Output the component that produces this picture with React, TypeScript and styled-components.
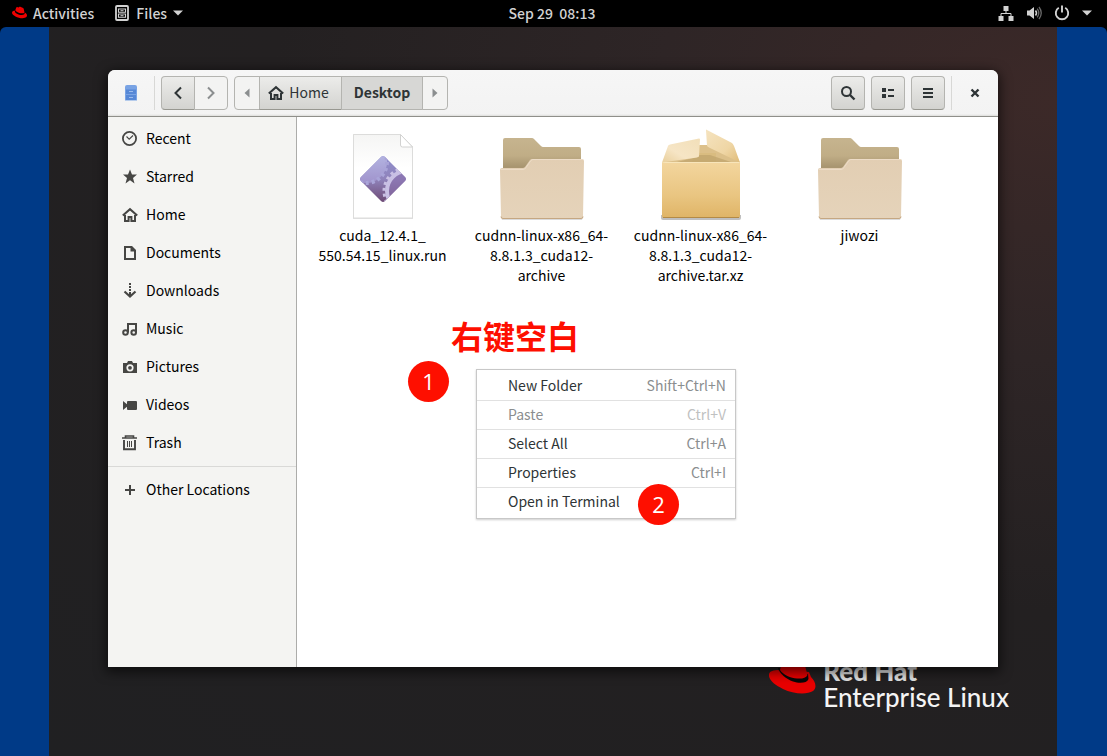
import React from "react";
import styled, { createGlobalStyle, css } from "styled-components";
import { FaRedhat } from "react-icons/fa";

const GlobalStyle = createGlobalStyle`
  * { box-sizing: border-box; }
  body {
    margin: 0;
    background: #000;
    font-family: "Noto Sans CJK SC", "Noto Sans", sans-serif;
    font-size: 14px;
    line-height: 20px;
    color: #000;
  }
  button { font: inherit; color: inherit; margin: 0; padding: 0; border: 0; background: none; }
  ul { list-style: none; margin: 0; padding: 0; }
  svg { display: block; flex: none; }
`;

const Screen = styled.div`
  display: flex;
  flex-direction: column;
  min-height: 100vh;
`;

const TopBar = styled.header`
  display: grid;
  grid-template-columns: 1fr auto 1fr;
  align-items: center;
  height: 27px;
  padding: 0 15px 2px 12px;
  color: #d2d2d2;
  font-weight: 500;
`;

const BarGroup = styled.div<{ $end?: boolean; $gap: number }>`
  display: flex;
  align-items: center;
  gap: ${(p) => p.$gap}px;
  justify-content: ${(p) => (p.$end ? "flex-end" : "flex-start")};
`;

const BarButton = styled.button`
  display: flex;
  align-items: center;
  gap: 6px;
  height: 24px;
  font-weight: 500;
`;

const Desktop = styled.main`
  flex: 1;
  display: flex;
  background: #003a87;
  border-radius: 6px 6px 0 0;
  padding: 0 50px 0 49px;
`;

const Wallpaper = styled.div`
  position: relative;
  isolation: isolate;
  flex: 1;
  display: flex;
  padding: 43px 59px 89px;
  background: radial-gradient(ellipse at 100% 10%, #3c2928 0%, #2e2526 28%, #232021 55%, #202022 100%);
`;

const Brand = styled.div`
  position: absolute;
  z-index: -1;
  right: 48px;
  bottom: 46px;
  display: flex;
  gap: 7px;
  color: #f4f4f4;
  font-family: Lato, sans-serif;
  font-size: 26px;
  font-weight: 500;
  line-height: 26px;
`;

const BrandName = styled.div`
  font-weight: 900;
  color: #e0e0e0;
`;

const Window = styled.section`
  flex: 1;
  display: flex;
  flex-direction: column;
  background: #fff;
  border-radius: 7px 7px 0 0;
  box-shadow: 0 3px 12px 2px rgba(0, 0, 0, 0.6);
`;

const HeaderBar = styled.div`
  display: flex;
  align-items: center;
  gap: 6px;
  height: 47px;
  padding: 0 6px 0 0;
  border-bottom: 1px solid #8f8f8a;
  border-radius: 7px 7px 0 0;
  background: linear-gradient(#f6f6f6, #f3f3f3 44px, #dededb 46px);
  color: #2e3436;
`;

const AppMark = styled.div`
  display: flex;
  justify-content: center;
  width: 40px;
  padding-left: 6px;
`;

const Divider = styled.div`
  width: 1px;
  height: 34px;
  background: #d8d8d6;
`;

const Linked = styled.div`
  display: flex;
  button + button { margin-left: -1px; }
  button:not(:first-child) { border-top-left-radius: 0; border-bottom-left-radius: 0; }
  button:not(:last-child) { border-top-right-radius: 0; border-bottom-right-radius: 0; }
`;

const tones = {
  raised: css`background: linear-gradient(#ececea, #d3d3d0); border-bottom-color: #979790;`,
  flat: css`background: #f3f3f2; color: #8b8e8f;`,
  pressed: css`background: #d7d7d5; font-weight: 700;`,
};

const ToolButton = styled.button<{ $tone: keyof typeof tones; $width: number }>`
  display: flex;
  align-items: center;
  justify-content: center;
  width: ${(p) => p.$width}px;
  height: 34px;
  border: 1px solid #b4b4b0;
  border-radius: 4px;
  ${(p) => tones[p.$tone]}
`;

const ToolLabel = styled.span<{ $afterIcon?: boolean }>`
  padding-bottom: 2px;
  margin: ${(p) => (p.$afterIcon ? "0 4px 0 5px" : "0")};
`;

const CloseButton = styled.button`
  display: flex;
  align-items: center;
  justify-content: center;
  width: 34px;
  height: 34px;
`;

const Spacer = styled.div`
  flex: 1;
`;

const Body = styled.div`
  flex: 1;
  display: flex;
`;

const Sidebar = styled.nav`
  width: 189px;
  padding-top: 3px;
  background: #f4f4f2;
  border-right: 1px solid #acacaa;
`;

const Place = styled.button`
  display: flex;
  align-items: center;
  gap: 8px;
  width: 100%;
  height: 38px;
  padding-left: 14px;
  svg { color: #464644; }
`;

const PlaceLabel = styled.span`
  padding-bottom: 2px;
`;

const SidebarRule = styled.hr`
  margin: 4px 0;
  border: 0;
  border-top: 1px solid #d9d9d7;
`;

const FilePane = styled.div`
  position: relative;
  flex: 1;
  padding: 12px 6px;
`;

const FileGrid = styled.ul`
  display: flex;
  flex-wrap: wrap;
`;

const FileItem = styled.li`
  width: 159px;
`;

const FileButton = styled.button`
  display: flex;
  flex-direction: column;
  align-items: center;
  width: 100%;
`;

const LabelLine = styled.span`
  display: block;
`;

const Note = styled.strong`
  position: absolute;
  left: 154px;
  top: 198px;
  font-size: 32px;
  line-height: 40px;
  font-weight: 700;
  color: #fe0f00;
  white-space: nowrap;
`;

const Step = styled.span<{ $x: number; $y: number }>`
  position: absolute;
  left: ${(p) => p.$x}px;
  top: ${(p) => p.$y}px;
  width: 41px;
  height: 41px;
  border-radius: 50%;
  background: #fe0f00;
  color: #fff;
  font-family: "Open Sans", sans-serif;
  font-size: 22px;
  line-height: 41px;
  text-align: center;
`;

const Menu = styled.ul`
  position: absolute;
  left: 179px;
  top: 252px;
  width: 260px;
  padding: 2px 0;
  border: 1px solid #c8c8c8;
  background: #fff;
  box-shadow: 0 1px 2px rgba(0, 0, 0, 0.2);
`;

const MenuRow = styled.li`
  & + & { border-top: 1px solid #e1e1e1; }
`;

const MenuButton = styled.button`
  display: flex;
  justify-content: space-between;
  align-items: center;
  width: 100%;
  height: 28px;
  padding: 0 9px 2px 31px;
  color: #2e3436;
  &:disabled { color: #8b8e8f; }
`;

const Shortcut = styled.span<{ $dim?: boolean }>`
  color: ${(p) => (p.$dim ? "#bfc1c1" : "#8b8e8f")};
`;

type Glyph = React.ReactNode;

const Icon = ({ children, size = 16 }: { children: Glyph; size?: number }) => (
  <svg width={size} height={size} viewBox="0 0 16 16" fill="none" stroke="currentColor" strokeWidth="2" aria-hidden="true">
    {children}
  </svg>
);

const homeGlyph = (
  <>
    <path d="M0.8 8.6 8 2.2l7.2 6.4" />
    <path d="M3 8v6h3.6v-4h2.8v4H13V8" />
  </>
);

const places: { name: string; glyph: Glyph }[] = [
  { name: "Recent", glyph: <><circle cx="7.5" cy="7.500" r="6.600" strokeWidth="1.800" /><path d="M4.500 5.500l2.700 2.700L11 4.500" strokeWidth="1.100" /></> },
  { name: "Starred", glyph: <path d="M8 .5l2 5h5l-4 3.400L12.500 14.500 8 11.200 3.500 14.500 5 8.900 1 5.500h5z" fill="currentColor" stroke="none" /> },
  { name: "Home", glyph: homeGlyph },
  { name: "Documents", glyph: <path d="M3 2h6.600L13 5.400V14H3zM9.500 2v3.500H13" /> },
  { name: "Downloads", glyph: <><path d="M2.500 8.500 8 13.500l5.500-5" strokeWidth="2.200" /><path d="M8 0v2M8 3v2M8 6v2M8 9v4" /></> },
  { name: "Music", glyph: <><circle cx="3.500" cy="11.500" r="2.300" strokeWidth="2" /><circle cx="11.700" cy="11.500" r="2.300" strokeWidth="2" /><path d="M6 11.500V3h8v8.500" /></> },
  { name: "Pictures", glyph: <path d="M1 4h4l1-2h4l1 2h4v10H1zM8 5.200a3.600 3.600 0 1 0 0 7.200 3.600 3.600 0 0 0 0-7.200zm0 1.700a1.900 1.900 0 1 1 0 3.800 1.900 1.900 0 0 1 0-3.800z" fill="currentColor" fillRule="evenodd" stroke="none" /> },
  { name: "Videos", glyph: <path d="M1 4l4 3.200V5q0-1 1-1h8q1 0 1 1v7q0 1-1 1H6q-1 0-1-1V9.800L1 13z" fill="currentColor" stroke="none" /> },
  { name: "Trash", glyph: <><path d="M0 3h15M3.500 3V1h8v2" strokeWidth="1.600" /><path d="M2 5v9.200h11V5" strokeWidth="1.900" /><path d="M5.500 6v6M7.500 6v6M9.500 6v6" strokeWidth="1" /></> },
];

const Hat = () => (
  <svg width="47" height="36" viewBox="0 0 47 36" aria-hidden="true">
    <path d="M0 16C-1 22 6 27 14 31 24 36 38 37 44 33 48 30 47 24 42 19L40 14 10 12C4 12 1 13 0 16Z" fill="#e80000" />
    <path d="M9 10C10 15 17 21 24 23.500 31 26 38 25 39.500 21L39 16 10 10Z" fill="#080808" />
    <path d="M11 12C14 17 22 20 28 20.500 33 21 37 20 38.500 17L35 4C32 0 28 1 24 3 20 1 15 0 13 4Z" fill="#e80000" />
  </svg>
);

const Cabinet = () => (
  <svg width="16" height="16" viewBox="0 0 16 16" aria-hidden="true">
    <path d="M2 2q0-2 2-2h8q2 0 2 2v13.500H2z" fill="#79a3e4" />
    <path d="M3 4.500h10v4.500H3zM3 10h10v5H3z" fill="#5788d6" />
    <path d="M6 6.500h4M6 12.500h4" stroke="#9dbcec" />
  </svg>
);

const FolderArt = () => (
  <svg width="96" height="96" viewBox="0 0 96 96" aria-hidden="true">
    <defs>
      <linearGradient id="folderBack" x2="0" y2="1">
        <stop offset="0" stopColor="#c6b48f" />
        <stop offset="0.25" stopColor="#c0ad86" />
        <stop offset="0.4" stopColor="#a99671" />
      </linearGradient>
      <linearGradient id="folderFront" x2="0" y2="1">
        <stop offset="0" stopColor="#e2ceb3" />
        <stop offset="1" stopColor="#e5d3ba" />
      </linearGradient>
    </defs>
    <path d="M7 88h82l-1 3H8z" fill="#000" opacity="0.14" />
    <path d="M9 11q0-2 2-2h27q1 0 2 1l7 7q1 1 2 1h36q2 0 2 2v60H9z" fill="url(#folderBack)" />
    <path d="M6 41q0-2 2-2h21q1 0 2-1l5-7q1-1 2-1h50q2 0 2 2l-1 56q0 2-2 2H9q-2 0-2-2z" fill="url(#folderFront)" />
    <path d="M7 87.500q0 2 2 2h78q2 0 2-2" fill="none" stroke="#c5a782" />
    <path d="M7 40.500h22q2 0 3-2l5-7q1-1 2-1h50" fill="none" stroke="#eddcc7" />
  </svg>
);

const RunArt = () => (
  <svg width="96" height="96" viewBox="0 0 96 96" aria-hidden="true">
    <defs>
      <linearGradient id="pageFill" x2="0" y2="1">
        <stop offset="0" stopColor="#f5f5f4" />
        <stop offset="0.4" stopColor="#fff" />
      </linearGradient>
      <linearGradient id="gemFill" x2="0" y2="1">
        <stop offset="0.1" stopColor="#8f8dca" />
        <stop offset="0.5" stopColor="#9083bb" />
        <stop offset="1" stopColor="#6c4872" />
      </linearGradient>
      <linearGradient id="gearFill" x2="0" y2="1">
        <stop offset="0" stopColor="#bdc5ec" />
        <stop offset="1" stopColor="#a093cc" />
      </linearGradient>
      <clipPath id="gem"><path d="M48 27q1 0 2 1l20 20q2 2 0 4L50 72q-2 2-4 0L26 52q-2-2 0-4l20-20q1-1 2-1z" /></clipPath>
    </defs>
    <path d="M18 5h47l13 13v72H18z" fill="#000" opacity="0.12" />
    <path d="M18.500 5.500H65l12.500 12.500v71h-59z" fill="url(#pageFill)" stroke="#dcdcdb" />
    <path d="M65.500 5.500v10.500q0 2 2 2h10z" fill="#fff" stroke="#d2d2d1" />
    <g clipPath="url(#gem)">
      <path d="M24 26h48v48H24z" fill="url(#gemFill)" />
      <circle cx="31" cy="33" r="21" fill="url(#gearFill)" />
      <circle cx="31" cy="33" r="21" fill="none" stroke="#a9a4d8" strokeWidth="4" strokeDasharray="3 3" />
      <circle cx="72" cy="62" r="21" fill="#8b6fae" opacity="0.6" />
      <circle cx="72" cy="62" r="20" fill="none" stroke="#c9c0e4" strokeWidth="4" />
      <circle cx="72" cy="62" r="23" fill="none" stroke="#c9c0e4" strokeWidth="3" strokeDasharray="3 3" />
    </g>
  </svg>
);

const BoxArt = () => (
  <svg width="96" height="96" viewBox="0 0 96 96" aria-hidden="true">
    <defs>
      <linearGradient id="boxFront" x2="0" y2="1">
        <stop offset="0" stopColor="#f3d69e" />
        <stop offset="0.6" stopColor="#e9c581" />
        <stop offset="1" stopColor="#dfb466" />
      </linearGradient>
      <linearGradient id="flapLeft" x1="1" x2="0" y2="1">
        <stop offset="0" stopColor="#f2dfb9" />
        <stop offset="0.6" stopColor="#f6e5c5" />
        <stop offset="1" stopColor="#e9cf9b" />
      </linearGradient>
      <linearGradient id="flapRight" x2="1" y2="1">
        <stop offset="0" stopColor="#f5e3bf" />
        <stop offset="0.6" stopColor="#efd6a5" />
        <stop offset="1" stopColor="#dfbb78" />
      </linearGradient>
    </defs>
    <path d="M8 86h80v3q0 2-2 2H10q-2 0-2-2z" fill="#000" opacity="0.25" />
    <path d="M44 16h12l26 8 5 10H9z" fill="#dcc08a" />
    <path d="M45 24h18v10H38z" fill="#d9bc80" />
    <path d="M45 26h12l24 8H20l24-6z" fill="#bea36b" opacity="0.7" />
    <path d="M9 33h78v54q0 2-2 2H11q-2 0-2-2z" fill="url(#boxFront)" />
    <path d="M9 33.500h78" stroke="#f8e5ba" />
    <path d="M10 88.500h76" stroke="#b38a46" />
    <path d="M9 33.500 15 17q0-1 2-1.500l29-6q1 0 1 1l-1 17-2 1z" fill="url(#flapLeft)" />
    <path d="M53 1.500Q53 0 54 1l25 13q1 1 2 3l6 16.500-31-15q-2-1-2-2z" fill="url(#flapRight)" />
  </svg>
);

const files = [
  { lines: ["cuda_12.4.1_", "550.54.15_linux.run"], art: <RunArt /> },
  { lines: ["cudnn-linux-x86_64-", "8.8.1.3_cuda12-", "archive"], art: <FolderArt /> },
  { lines: ["cudnn-linux-x86_64-", "8.8.1.3_cuda12-", "archive.tar.xz"], art: <BoxArt /> },
  { lines: ["jiwozi"], art: <FolderArt /> },
];

const commands = [
  { name: "New Folder", keys: "Shift+Ctrl+N" },
  { name: "Paste", keys: "Ctrl+V", disabled: true },
  { name: "Select All", keys: "Ctrl+A" },
  { name: "Properties", keys: "Ctrl+I" },
  { name: "Open in Terminal", keys: "" },
];

const DownArrow = () => (
  <svg width="10" height="6" viewBox="0 0 10 6" aria-hidden="true"><path d="M0 .5h10L5 5.500z" fill="currentColor" /></svg>
);

export default function App() {
  return (
    <Screen>
      <GlobalStyle />
      <TopBar>
        <BarGroup $gap={20}>
          <BarButton><FaRedhat size={15} color="#ee0000" />Activities</BarButton>
          <BarButton>
            <Icon>
              <rect x="2" y="1" width="12" height="14" rx="1" strokeWidth="1.800" />
              <path d="M4.500 4h7v3.300h-7zM4.500 9h7v3.300h-7z" strokeWidth="1.100" />
              <path d="M6.500 5.700h3M6.500 10.700h3" strokeWidth="1" />
            </Icon>
            Files<DownArrow />
          </BarButton>
        </BarGroup>
        <BarButton>Sep 29&nbsp; 08:13</BarButton>
        <BarGroup $gap={12} $end>
          <Icon>
            <path d="M5.500 1h5v5h-5zM0.500 11h5v5h-5zM10.500 11h5v5h-5z" fill="currentColor" stroke="none" />
            <path d="M8 5v3.500M3 11V8.500h10V11" strokeWidth="1" />
          </Icon>
          <Icon>
            <path d="M1 5.500h2.500L8 2v12L3.500 10.500H1z" fill="currentColor" stroke="none" />
            <path d="M9.500 5.500q2 2.500 0 5" strokeWidth="1.500" />
            <path d="M11.200 3.700q3.200 4.300 0 8.600M13 2q4.500 6 0 12" strokeWidth="1.300" opacity="0.5" />
          </Icon>
          <Icon><path d="M4.800 2.800a6.200 6.200 0 1 0 6.400 0M8 0.500v7" strokeWidth="1.900" /></Icon>
          <DownArrow />
        </BarGroup>
      </TopBar>
      <Desktop>
        <Wallpaper>
          <Brand>
            <Hat />
            <div>
              <BrandName>Red Hat</BrandName>
              <div>Enterprise Linux</div>
            </div>
          </Brand>
          <Window>
            <HeaderBar>
              <AppMark><Cabinet /></AppMark>
              <Divider />
              <Linked>
                <ToolButton $tone="raised" $width={34} aria-label="Back"><Icon><path d="M11 2.500 5.500 8l5.500 5.500" /></Icon></ToolButton>
                <ToolButton $tone="flat" $width={34} aria-label="Forward"><Icon><path d="M5 2.500 10.500 8 5 13.500" /></Icon></ToolButton>
              </Linked>
              <Linked>
                <ToolButton $tone="flat" $width={26} aria-label="Earlier folders"><Icon><path d="M10.500 3.500v9L5.500 8z" fill="currentColor" stroke="none" /></Icon></ToolButton>
                <ToolButton $tone="raised" $width={83}><Icon>{homeGlyph}</Icon><ToolLabel $afterIcon>Home</ToolLabel></ToolButton>
                <ToolButton $tone="pressed" $width={82}><ToolLabel>Desktop</ToolLabel></ToolButton>
                <ToolButton $tone="flat" $width={26} aria-label="Later folders"><Icon><path d="M5.500 3.500v9l5-4.500z" fill="currentColor" stroke="none" /></Icon></ToolButton>
              </Linked>
              <Spacer />
              <ToolButton $tone="raised" $width={34} aria-label="Search"><Icon><circle cx="6.500" cy="6.500" r="4.500" /><path d="M10 10l4.500 4.500" strokeWidth="2.400" /></Icon></ToolButton>
              <ToolButton $tone="raised" $width={34} aria-label="List view"><Icon><path d="M2 3h4v4H2zM2 9h4v4H2zM8 4h6v2H8zM8 10h6v2H8z" fill="currentColor" stroke="none" /></Icon></ToolButton>
              <ToolButton $tone="raised" $width={34} aria-label="Menu"><Icon><path d="M3 4h10M3 8h10M3 12h10" /></Icon></ToolButton>
              <Divider />
              <CloseButton aria-label="Close"><Icon><path d="M4.500 4.500l7 7M11.500 4.500l-7 7" strokeWidth="2.400" /></Icon></CloseButton>
            </HeaderBar>
            <Body>
              <Sidebar>
                {places.map((p) => (
                  <Place key={p.name}><Icon>{p.glyph}</Icon><PlaceLabel>{p.name}</PlaceLabel></Place>
                ))}
                <SidebarRule />
                <Place><Icon><path d="M8 3v10M3 8h10" /></Icon><PlaceLabel>Other Locations</PlaceLabel></Place>
              </Sidebar>
              <FilePane>
                <FileGrid>
                  {files.map((f) => (
                    <FileItem key={f.lines.join("")}>
                      <FileButton>
                        {f.art}
                        <span>{f.lines.map((l) => <LabelLine key={l}>{l}</LabelLine>)}</span>
                      </FileButton>
                    </FileItem>
                  ))}
                </FileGrid>
                <Note>右键空白</Note>
                <Menu>
                  {commands.map((c) => (
                    <MenuRow key={c.name}>
                      <MenuButton disabled={c.disabled}>
                        {c.name}
                        <Shortcut $dim={c.disabled}>{c.keys}</Shortcut>
                      </MenuButton>
                    </MenuRow>
                  ))}
                </Menu>
                <Step $x={111} $y={244}>1</Step>
                <Step $x={341} $y={367}>2</Step>
              </FilePane>
            </Body>
          </Window>
        </Wallpaper>
      </Desktop>
    </Screen>
  );
}
